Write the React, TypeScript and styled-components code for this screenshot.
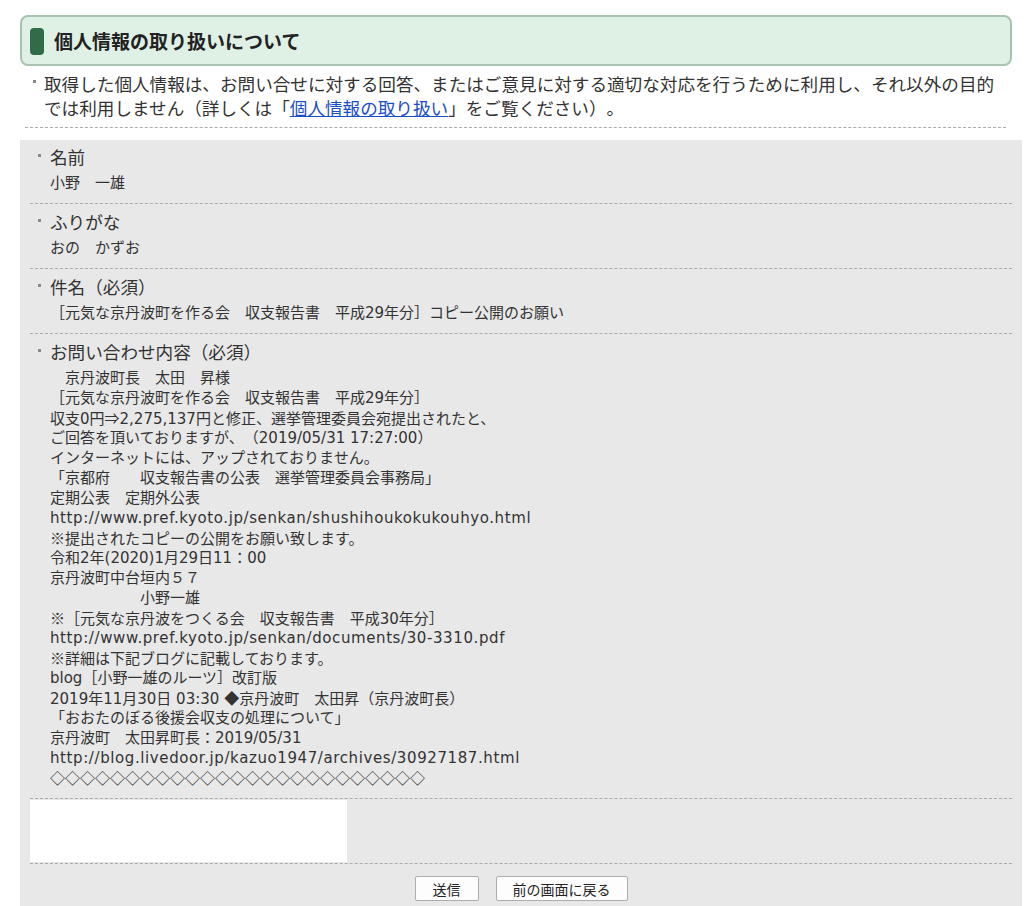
import React from "react";
import styled, { createGlobalStyle } from "styled-components";

const GlobalStyle = createGlobalStyle`
  body {
    margin: 0;
    background: #fff;
    color: #333;
    font-family: "DejaVu Sans", "Noto Sans CJK JP", sans-serif;
    text-spacing-trim: space-all;
  }
`;

const Page = styled.div`
  width: 1002px;
  padding: 15px 0 0 20px;
`;

const Heading = styled.h2`
  margin: 0 10px 0 0;
  height: 47px;
  padding: 0 8px;
  display: flex;
  align-items: center;
  gap: 10px;
  border: 2px solid #a8c3b0;
  border-radius: 8px;
  background: #dff0e5;
  color: #222;
  font-family: "Noto Sans CJK JP", sans-serif;
  font-size: 19px;
  font-weight: bold;
`;

const AccentBar = styled.span`
  width: 14px;
  height: 27px;
  margin-top: 2px;
  border-radius: 4px;
  background: #2f6c47;
`;

const Marker = styled.span<{ top: number; left: number; right: number }>`
  flex-shrink: 0;
  width: 3px;
  height: 3px;
  background: #888;
  margin: ${(p) => `${p.top}px ${p.right}px 0 ${p.left}px`};
`;

const Notice = styled.div`
  display: flex;
  margin: 6px 16px 0 5px;
  padding-bottom: 7px;
  border-bottom: 1px dashed #aaa;
`;

const NoticeText = styled.p`
  margin: 0;
  font-family: "Noto Sans CJK JP", sans-serif;
  font-size: 17.6px;
  line-height: 24px;

  a {
    color: #1a4ec8;
    text-decoration: underline;
  }
`;

const Panel = styled.div`
  margin-top: 12px;
  padding: 0 10px 20px;
  background: #e8e8e8;
`;

const Field = styled.div`
  padding: 5px 0 10px;
  border-bottom: 1px dashed #aaa;

  &:first-child {
    padding-top: 4px;
  }
`;

const FieldLabel = styled.div`
  display: flex;
  height: 26px;
  margin-bottom: 1px;
  font-family: "Noto Sans CJK JP", sans-serif;
  font-size: 17.6px;
  line-height: 26px;
`;

const FieldValue = styled.div`
  padding: 2px 0 0 20px;
  font-size: 15px;
  line-height: 20px;
  white-space: pre-wrap;
`;

const Line = styled.div`
  height: 20px;
  white-space: pre;
`;

const Sym = styled.span`
  font-family: "Noto Sans CJK JP", sans-serif;
`;

const Url = styled.span`
  letter-spacing: 0.6px;
`;

const CaptchaRow = styled.div`
  padding: 1px 0;
  border-bottom: 1px dashed #aaa;
`;

const CaptchaBox = styled.div`
  width: 317px;
  height: 62px;
  background: #fff;
`;

const Buttons = styled.div`
  display: flex;
  justify-content: center;
  gap: 17px;
  margin-top: 12px;
`;

const Button = styled.button<{ width: number }>`
  width: ${(p) => p.width}px;
  height: 25px;
  padding: 0;
  border: 1px solid #adadad;
  border-radius: 2px;
  background: #fdfdfd;
  color: #222;
  font-family: "Noto Sans CJK JP", sans-serif;
  font-size: 14px;
`;

const fields = [
  { label: "名前", value: "小野　一雄" },
  { label: "ふりがな", value: "おの　かずお" },
  {
    label: "件名（必須）",
    value: "［元気な京丹波町を作る会　収支報告書　平成29年分］コピー公開のお願い",
  },
];

const message: React.ReactNode[] = [
  "　京丹波町長　太田　昇様",
  "［元気な京丹波町を作る会　収支報告書　平成29年分］",
  <>
    収支0円<Sym>⇒</Sym>2,275,137円と修正、選挙管理委員会宛提出されたと、
  </>,
  "ご回答を頂いておりますが、（2019/05/31 17:27:00）",
  "インターネットには、アップされておりません。",
  "「京都府　　収支報告書の公表　選挙管理委員会事務局」",
  "定期公表　定期外公表",
  <Url>http://www.pref.kyoto.jp/senkan/shushihoukokukouhyo.html</Url>,
  <>
    <Sym>※</Sym>提出されたコピーの公開をお願い致します。
  </>,
  "令和2年(2020)1月29日11：00",
  "京丹波町中台垣内５７",
  "　　　　　　小野一雄",
  <>
    <Sym>※</Sym>［元気な京丹波をつくる会　収支報告書　平成30年分］
  </>,
  <Url>http://www.pref.kyoto.jp/senkan/documents/30-3310.pdf</Url>,
  <>
    <Sym>※</Sym>詳細は下記ブログに記載しております。
  </>,
  "blog［小野一雄のルーツ］改訂版",
  <>
    2019年11月30日 03:30 <Sym>◆</Sym>京丹波町　太田昇（京丹波町長）
  </>,
  "「おおたのぼる後援会収支の処理について」",
  "京丹波町　太田昇町長：2019/05/31",
  <Url>http://blog.livedoor.jp/kazuo1947/archives/30927187.html</Url>,
  <Sym>◇◇◇◇◇◇◇◇◇◇◇◇◇◇◇◇◇◇◇◇◇◇◇◇◇</Sym>,
];

const App = () => {
  return (
    <>
      <GlobalStyle />
      <Page>
        <Heading>
          <AccentBar />
          個人情報の取り扱いについて
        </Heading>

        <Notice>
          <Marker top={8} left={8} right={8} />
          <NoticeText>
            取得した個人情報は、お問い合せに対する回答、またはご意見に対する適切な対応を行うために利用し、それ以外の目的では利用しません（詳しくは「
            <a href="#privacy">個人情報の取り扱い</a>」をご覧ください）。
          </NoticeText>
        </Notice>

        <Panel>
          {fields.map((f, i) => (
            <Field key={i}>
              <FieldLabel>
                <Marker top={10} left={8} right={9} />
                {f.label}
              </FieldLabel>
              <FieldValue>{f.value}</FieldValue>
            </Field>
          ))}

          <Field>
            <FieldLabel>
              <Marker top={10} left={8} right={9} />
              お問い合わせ内容（必須）
            </FieldLabel>
            <FieldValue>
              {message.map((line, i) => (
                <Line key={i}>{line}</Line>
              ))}
            </FieldValue>
          </Field>

          <CaptchaRow>
            <CaptchaBox />
          </CaptchaRow>

          <Buttons>
            <Button type="submit" width={64}>
              送信
            </Button>
            <Button type="button" width={132}>
              前の画面に戻る
            </Button>
          </Buttons>
        </Panel>
      </Page>
    </>
  );
};

export default App;
